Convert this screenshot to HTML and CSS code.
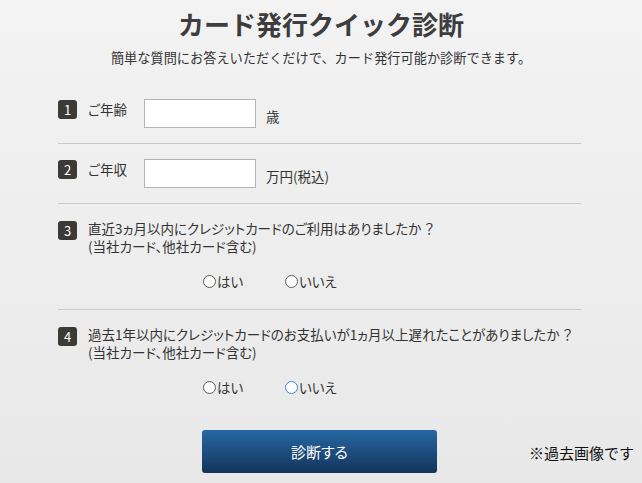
FILE: index.html
```html
<!DOCTYPE html>
<html lang="ja">
<head>
<meta charset="utf-8">
<title>カード発行クイック診断</title>
<link rel="stylesheet" href="styles.css">
</head>
<body>
<div class="page">
  <h1 class="title">カード発行クイック診断</h1>
  <p class="lead">簡単な質問にお答えいただくだけで、カード発行可能か診断できます。</p>
  <form class="form">
    <div class="row row-input">
      <span class="badge">1</span>
      <span class="label">ご年齢</span>
      <span class="field"></span>
      <span class="unit">歳</span>
    </div>
    <div class="row row-input">
      <span class="badge">2</span>
      <span class="label">ご年収</span>
      <span class="field"></span>
      <span class="unit">万円(税込)</span>
    </div>
    <div class="row row-q">
      <div class="qline">
        <span class="badge">3</span>
        <p class="qtext">直近3ヵ月以内にクレジットカードのご利用はありましたか ？<br>(当社カード、他社カード含む)</p>
      </div>
      <div class="choices">
        <span class="choice"><span class="radio"></span>はい</span>
        <span class="choice"><span class="radio"></span>いいえ</span>
      </div>
    </div>
    <div class="row row-q row-last">
      <div class="qline">
        <span class="badge">4</span>
        <p class="qtext">過去1年以内にクレジットカードのお支払いが1ヵ月以上遅れたことがありましたか ？<br>(当社カード、他社カード含む)</p>
      </div>
      <div class="choices">
        <span class="choice"><span class="radio"></span>はい</span>
        <span class="choice"><span class="radio radio-hover"></span>いいえ</span>
      </div>
    </div>
    <div class="actions">
      <span class="button">診断する</span>
    </div>
  </form>
  <p class="note">※過去画像です</p>
</div>
</body>
</html>
```
FILE: styles.css
```css
html, body {
  margin: 0;
  padding: 0;
}
body {
  width: 642px;
  height: 483px;
  overflow: hidden;
  background: linear-gradient(#f3f3f3, #e8e8e8);
  font-family: "Noto Sans CJK JP", "Noto Sans", sans-serif;
  color: #333;
}
.page {
  position: relative;
  height: 483px;
}
.title {
  margin: 0;
  padding-top: 8px;
  font-size: 26px;
  line-height: 32px;
  font-weight: 700;
  text-align: center;
  color: #3d3d3d;
}
.lead {
  margin: 8px 0 0;
  font-size: 13.2px;
  line-height: 20px;
  text-align: center;
  color: #333;
}
.form {
  margin: 31px 61px 0 58px;
  font-size: 13.5px;
  font-feature-settings: "palt";
}
.row {
  border-bottom: 1px solid #c9c9c9;
}
.row-input {
  display: flex;
  align-items: flex-start;
  padding: 0 0 15px;
}
.row-input + .row-input {
  padding-top: 15px;
}
.badge {
  flex: none;
  width: 19px;
  height: 19px;
  border-radius: 3px;
  background: #3b3a35;
  color: #fff;
  font-size: 13px;
  line-height: 19px;
  text-align: center;
  margin-top: 1px;
}
.label {
  width: 56px;
  margin-left: 11px;
  line-height: 18px;
  padding-top: 1px;
}
.field {
  width: 110px;
  height: 27px;
  background: #fff;
  border: 1px solid #b4b4b4;
}
.unit {
  margin-left: 10px;
  padding-top: 8px;
  line-height: 18px;
}
.row-q {
  padding: 16px 0 20px;
}
.row-last {
  border-bottom: none;
  padding-top: 16px;
  padding-bottom: 0;
}
.qline {
  display: flex;
  align-items: flex-start;
}
.qtext {
  margin: -1px 0 0 11px;
  line-height: 18px;
}
.choices {
  display: flex;
  margin-top: 18px;
  padding-left: 145px;
  line-height: 16px;
}
.row-last .choices {
  margin-top: 18px;
}
.choice {
  display: inline-flex;
  align-items: center;
  width: 82px;
}
.radio {
  box-sizing: border-box;
  width: 13px;
  height: 13px;
  border: 1.5px solid #5a5a5a;
  border-radius: 50%;
  background: #fff;
  margin-right: 1px;
}
.radio-hover {
  border-color: #2f86e0;
}
.actions {
  margin-top: 35px;
  padding-left: 144px;
}
.button {
  display: flex;
  align-items: center;
  justify-content: center;
  width: 235px;
  height: 43px;
  border-radius: 3px;
  background: linear-gradient(#2668a4, #14345b);
  color: #fff;
  font-size: 15px;
}
.note {
  position: absolute;
  left: 529px;
  top: 444px;
  margin: 0;
  font-size: 15px;
  line-height: 18px;
  color: #111;
}
```
